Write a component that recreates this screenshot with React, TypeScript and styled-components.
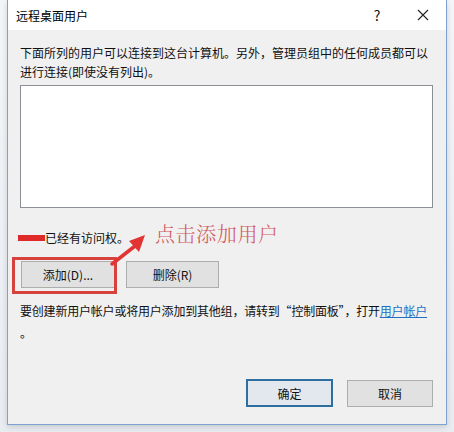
import React from "react";
import styled, { createGlobalStyle } from "styled-components";

const Global = createGlobalStyle`
  html, body { margin: 0; padding: 0; background: #eef1f5; }
  body { font-family: "Noto Sans CJK SC", "Noto Sans", sans-serif; }
`;

const Page = styled.div`
  width: 454px;
  height: 432px;
  display: flex;
  align-items: flex-start;
  padding-left: 7px;
  box-sizing: border-box;
  background: linear-gradient(#f3f5f9, #e9ecf1);
`;

const Window = styled.div`
  width: 440px;
  height: 425px;
  box-sizing: border-box;
  border: 1px solid #7ea2cf;
  border-top: none;
  background: #f0f0f0;
  display: flex;
  flex-direction: column;
  position: relative;
  box-shadow: 0 2px 6px rgba(0, 0, 0, 0.15);
`;

const TitleBar = styled.div`
  height: 30px;
  flex: none;
  background: #ffffff;
  display: flex;
  align-items: center;
  padding-left: 8px;
  font-size: 12px;
  color: #000;
`;

const Title = styled.span`
  flex: 1;
`;

const TitleButton = styled.span<{ $w: number }>`
  width: ${(p) => p.$w}px;
  height: 30px;
  display: flex;
  align-items: center;
  justify-content: center;
  font-size: 14px;
  color: #111;
`;

const Body = styled.div`
  flex: 1;
  display: flex;
  flex-direction: column;
  padding: 13px 13px 17px 12px;
  font-size: 12px;
  color: #111;
  position: relative;
`;

const Para = styled.p<{ $lh: number }>`
  margin: 0;
  line-height: ${(p) => p.$lh}px;
  white-space: nowrap;
`;

const ListBox = styled.div`
  margin-top: 4px;
  height: 123px;
  box-sizing: border-box;
  border: 1px solid #8b8f96;
  background: #ffffff;
`;

const AccessRow = styled.div`
  margin-top: 20px;
  height: 19px;
  display: flex;
  align-items: center;
  line-height: 19px;
`;

const Redact = styled.span`
  width: 27px;
  height: 6px;
  margin-left: -2px;
  background: #e02a2a;
  flex: none;
`;

const ButtonRow = styled.div`
  margin-top: 14px;
  display: flex;
  gap: 11px;
  padding-left: 1px;
  position: relative;
`;

const Btn = styled.button<{ $w: number; $default?: boolean }>`
  width: ${(p) => p.$w}px;
  height: ${(p) => (p.$default ? 28 : 27)}px;
  box-sizing: border-box;
  background: ${(p) => (p.$default ? "#e3e8ee" : "#e1e1e1")};
  border: ${(p) => (p.$default ? "2px solid #2f6f9f" : "1px solid #adadad")};
  font-family: "Noto Sans CJK SC", "Noto Sans", sans-serif;
  font-size: 12px;
  color: #111;
  padding: 0;
  display: flex;
  align-items: center;
  justify-content: center;
`;

const Highlight = styled.div`
  position: absolute;
  left: -8px;
  top: -4px;
  width: 105px;
  height: 37px;
  box-sizing: border-box;
  border: 3px solid #d8423c;
  pointer-events: none;
`;

const Annotation = styled.div`
  position: absolute;
  left: 135px;
  top: -42px;
  font-family: "Noto Serif CJK SC", "Noto Sans CJK SC", serif;
  font-size: 20px;
  font-weight: 300;
  color: #d0585c;
  letter-spacing: 0.6px;
  white-space: nowrap;
`;

const Arrow = styled.svg`
  position: absolute;
  left: 88px;
  top: -27px;
  overflow: visible;
`;

const InfoText = styled.div`
  margin-top: 12px;
  line-height: 22px;
  white-space: nowrap;
  letter-spacing: -0.2px;
`;

const Link = styled.a`
  color: #1f6fc5;
  text-decoration: underline;
`;

const Footer = styled.div`
  margin-top: auto;
  display: flex;
  justify-content: flex-end;
  align-items: center;
  gap: 14px;
`;

export default function App() {
  return (
    <>
      <Global />
      <Page>
        <Window>
          <TitleBar>
            <Title>远程桌面用户</Title>
            <TitleButton $w={46}>?</TitleButton>
            <TitleButton $w={46}>
              <svg width="12" height="12" viewBox="0 0 12 12">
                <path d="M1 1 L11 11 M11 1 L1 11" stroke="#222" strokeWidth="1.1" />
              </svg>
            </TitleButton>
          </TitleBar>
          <Body>
            <Para $lh={19}>
              下面所列的用户可以连接到这台计算机。另外，管理员组中的任何成员都可以
              <br />
              进行连接(即使没有列出)。
            </Para>
            <ListBox />
            <AccessRow>
              <Redact />
              <span>已经有访问权。</span>
            </AccessRow>
            <ButtonRow>
              <Btn $w={94}>添加(D)...</Btn>
              <Btn $w={93}>删除(R)</Btn>
              <Highlight />
              <Arrow width="40" height="34" viewBox="0 0 40 34">
                <path d="M4 30 L27 12" stroke="#e23434" strokeWidth="3.5" strokeLinecap="round" />
                <path d="M37 1 L21 7 L31 18 Z" fill="#e23434" />
              </Arrow>
              <Annotation>点击添加用户</Annotation>
            </ButtonRow>
            <InfoText>
              要创建新用户帐户或将用户添加到其他组，请转到“控制面板”，打开<Link>用户帐户</Link>
              <br />。
            </InfoText>
            <Footer>
              <Btn $w={87} $default>
                确定
              </Btn>
              <Btn $w={86}>取消</Btn>
            </Footer>
          </Body>
        </Window>
      </Page>
    </>
  );
}
